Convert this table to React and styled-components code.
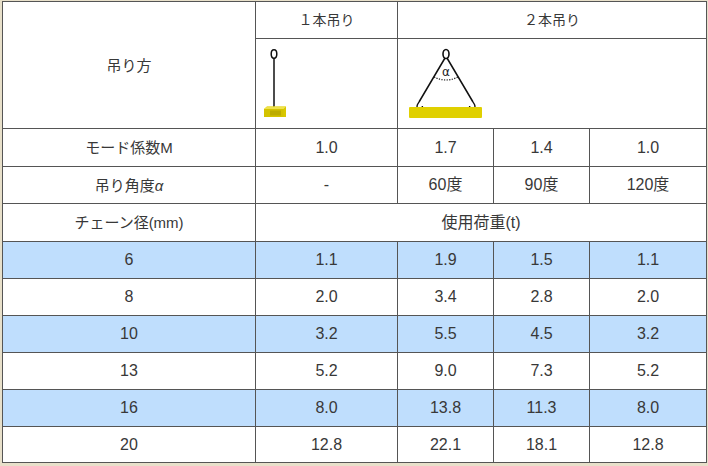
import React from "react";
import styled, { createGlobalStyle } from "styled-components";

const GlobalStyle = createGlobalStyle`
  html, body {
    margin: 0;
    padding: 0;
    background: #e8e0ca;
  }
`;

const Page = styled.div`
  padding: 1px 0 0 2px;
  width: 708px;
  height: 466px;
  box-sizing: border-box;
`;

const Table = styled.table`
  width: 704px;
  table-layout: fixed;
  border-collapse: collapse;
  background: #fff;
  font-family: "Liberation Sans", "Noto Sans CJK JP", sans-serif;
  font-size: 16px;
  color: #383838;
`;

const Row = styled.tr`
  height: ${(p) => p.$h || 37}px;
  background: ${(p) => (p.$blue ? "#bfdefd" : "#fff")};
`;

const Cell = styled.td`
  border: 1px solid #555;
  text-align: center;
  vertical-align: middle;
  padding: 0;
  line-height: 1;
`;

const LabelCell = styled(Cell)`
  font-size: 15px;
`;

const HeadCell = styled(Cell)`
  font-size: 14px;
`;

const PicCell = styled(Cell)`
  text-align: left;
  padding-left: ${(p) => p.$pad}px;
  svg {
    display: block;
  }
`;

const SingleSling = () => (
  <svg width="28" height="74" viewBox="0 0 28 74">
    <ellipse cx="12" cy="7" rx="2.8" ry="4.2" fill="none" stroke="#111" strokeWidth="1.5" />
    <path d="M12 11 V56" stroke="#111" strokeWidth="1.5" fill="none" />
    <path d="M12 56 V58.5 Q12 62.5 9 62.5 Q6.5 62.5 6.5 60" stroke="#111" strokeWidth="1.5" fill="none" />
    <path d="M2 62 L5 59.5 H24 L24 70 H2 Z" fill="#d9c800" />
    <path d="M2 62 L5 59.5 H24 L21.5 62 Z" fill="#efe24a" />
    <rect x="2" y="62" width="19.5" height="8" fill="#d4c300" />
    <rect x="8" y="63.5" width="11" height="5" fill="#bcac00" />
  </svg>
);

const DoubleSling = () => (
  <svg width="80" height="75" viewBox="0 0 80 75">
    <ellipse cx="40" cy="8" rx="3" ry="4.5" fill="none" stroke="#111" strokeWidth="1.6" />
    <path d="M39 12 L13 56 M41 12 L67 56" stroke="#111" strokeWidth="1.5" fill="none" />
    <path d="M13 56 L11.5 58.5 Q10 62 13 62.5 Q16 63 16.5 60" stroke="#111" strokeWidth="1.4" fill="none" />
    <path d="M67 56 L68.5 58.5 Q70 62 67 62.5 Q64 63 63.5 60" stroke="#111" strokeWidth="1.4" fill="none" />
    <path d="M28 31 Q40 37 52 31" stroke="#222" strokeWidth="1.2" strokeDasharray="1.3 1.3" fill="none" />
    <text x="40" y="30" fontSize="12" textAnchor="middle" fill="#222" fontFamily="DejaVu Sans, sans-serif">α</text>
    <rect x="3" y="61" width="73" height="11" rx="1" fill="#e0d000" />
  </svg>
);

const rows = [
  ["6", "1.1", "1.9", "1.5", "1.1"],
  ["8", "2.0", "3.4", "2.8", "2.0"],
  ["10", "3.2", "5.5", "4.5", "3.2"],
  ["13", "5.2", "9.0", "7.3", "5.2"],
  ["16", "8.0", "13.8", "11.3", "8.0"],
  ["20", "12.8", "22.1", "18.1", "12.8"],
];

const App = () => {
  return (
    <Page>
      <GlobalStyle />
      <Table>
        <colgroup>
          <col style={{ width: 253 }} />
          <col style={{ width: 142 }} />
          <col style={{ width: 96 }} />
          <col style={{ width: 96 }} />
          <col style={{ width: 117 }} />
        </colgroup>
        <tbody>
          <Row>
            <LabelCell rowSpan={2}>吊り方</LabelCell>
            <HeadCell>１本吊り</HeadCell>
            <HeadCell colSpan={3}>２本吊り</HeadCell>
          </Row>
          <Row $h={90}>
            <PicCell $pad={6}>
              <SingleSling />
            </PicCell>
            <PicCell colSpan={3} $pad={8}>
              <DoubleSling />
            </PicCell>
          </Row>
          <Row $h={38}>
            <LabelCell>モード係数M</LabelCell>
            <Cell>1.0</Cell>
            <Cell>1.7</Cell>
            <Cell>1.4</Cell>
            <Cell>1.0</Cell>
          </Row>
          <Row>
            <LabelCell>吊り角度<i>α</i></LabelCell>
            <Cell>-</Cell>
            <Cell>60度</Cell>
            <Cell>90度</Cell>
            <Cell>120度</Cell>
          </Row>
          <Row $h={38}>
            <LabelCell>チェーン径(mm)</LabelCell>
            <Cell colSpan={4}>使用荷重(t)</Cell>
          </Row>
          {rows.map((r, i) => (
            <Row key={r[0]} $blue={i % 2 === 0} $h={i === rows.length - 1 ? 36 : 37}>
              {r.map((v, j) => (
                <Cell key={j}>{v}</Cell>
              ))}
            </Row>
          ))}
        </tbody>
      </Table>
    </Page>
  );
};

export default App;
